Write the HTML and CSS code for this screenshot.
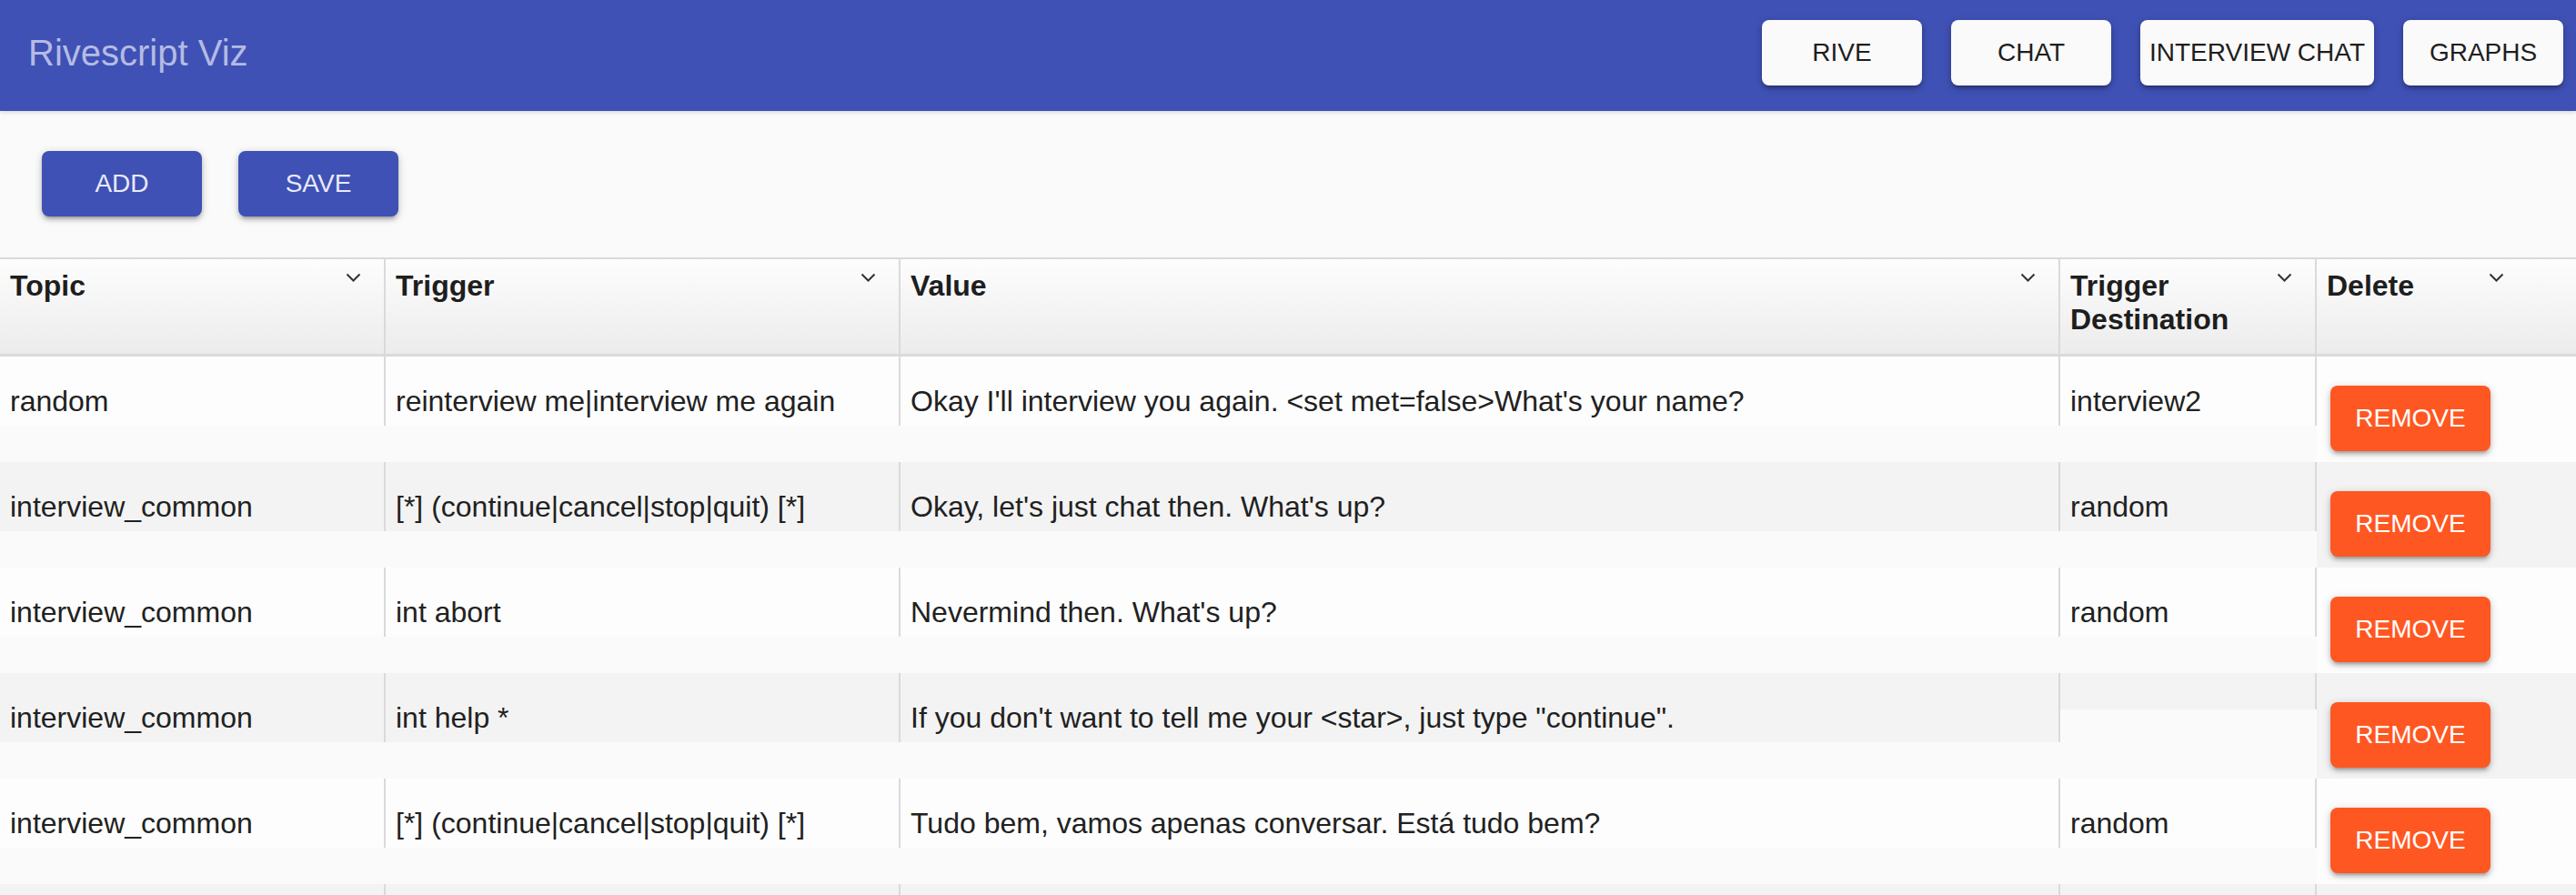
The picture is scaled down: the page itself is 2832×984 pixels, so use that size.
FILE: index.html
```html
<!DOCTYPE html>
<html lang="en">
<head>
<meta charset="utf-8">
<title>Rivescript Viz</title>
<link rel="stylesheet" href="styles.css">
</head>
<body>
<header class="appbar">
  <div class="title">Rivescript Viz</div>
  <nav class="nav">
    <button class="btn btn-light">RIVE</button>
    <button class="btn btn-light">CHAT</button>
    <button class="btn btn-light">INTERVIEW CHAT</button>
    <button class="btn btn-light">GRAPHS</button>
  </nav>
</header>

<div class="toolbar">
  <button class="btn btn-primary">ADD</button>
  <button class="btn btn-primary">SAVE</button>
</div>

<div class="grid">
  <div class="row head">
    <div class="hcell"><span>Topic</span><svg class="chev" viewBox="0 0 17 11"><polyline points="1.5,1.5 8.5,8.5 15.5,1.5"/></svg></div>
    <div class="hcell"><span>Trigger</span><svg class="chev" viewBox="0 0 17 11"><polyline points="1.5,1.5 8.5,8.5 15.5,1.5"/></svg></div>
    <div class="hcell"><span>Value</span><svg class="chev" viewBox="0 0 17 11"><polyline points="1.5,1.5 8.5,8.5 15.5,1.5"/></svg></div>
    <div class="hcell"><span>Trigger Destination</span><svg class="chev" viewBox="0 0 17 11"><polyline points="1.5,1.5 8.5,8.5 15.5,1.5"/></svg></div>
    <div class="hcell hcell-last"><span>Delete</span><svg class="chev" viewBox="0 0 17 11"><polyline points="1.5,1.5 8.5,8.5 15.5,1.5"/></svg></div>
  </div>

  <div class="row odd">
    <div class="cell">random</div>
    <div class="cell">reinterview me|interview me again</div>
    <div class="cell">Okay I'll interview you again. &lt;set met=false&gt;What's your name?</div>
    <div class="cell">interview2</div>
    <div class="dcell"><button class="btn btn-danger">REMOVE</button></div>
  </div>

  <div class="row even">
    <div class="cell">interview_common</div>
    <div class="cell">[*] (continue|cancel|stop|quit) [*]</div>
    <div class="cell">Okay, let's just chat then. What's up?</div>
    <div class="cell">random</div>
    <div class="dcell"><button class="btn btn-danger">REMOVE</button></div>
  </div>

  <div class="row odd">
    <div class="cell">interview_common</div>
    <div class="cell">int abort</div>
    <div class="cell">Nevermind then. What's up?</div>
    <div class="cell">random</div>
    <div class="dcell"><button class="btn btn-danger">REMOVE</button></div>
  </div>

  <div class="row even">
    <div class="cell">interview_common</div>
    <div class="cell">int help *</div>
    <div class="cell">If you don't want to tell me your &lt;star&gt;, just type "continue".</div>
    <div class="cell"></div>
    <div class="dcell"><button class="btn btn-danger">REMOVE</button></div>
  </div>

  <div class="row odd">
    <div class="cell">interview_common</div>
    <div class="cell">[*] (continue|cancel|stop|quit) [*]</div>
    <div class="cell">Tudo bem, vamos apenas conversar. Está tudo bem?</div>
    <div class="cell">random</div>
    <div class="dcell"><button class="btn btn-danger">REMOVE</button></div>
  </div>

  <div class="row even">
    <div class="cell"></div>
    <div class="cell"></div>
    <div class="cell"></div>
    <div class="cell"></div>
    <div class="dcell"></div>
  </div>
</div>
</body>
</html>
```

FILE: styles.css
```css
* { box-sizing: border-box; }

html, body {
  margin: 0;
  padding: 0;
  background: #fafafa;
  font-family: "Liberation Sans", Arial, Helvetica, sans-serif;
  color: #212121;
}

.appbar {
  height: 122px;
  background: #3f51b5;
  display: flex;
  align-items: center;
  justify-content: space-between;
  padding: 0 14px 6px 31px;
  box-shadow: 0 2px 4px rgba(0,0,0,0.12);
  position: relative;
  z-index: 1;
}

.title {
  font-size: 40px;
  line-height: 46px;
  color: #b4bbe3;
  font-weight: 400;
}

.nav {
  display: flex;
  gap: 32px;
}

.btn {
  font-family: "Liberation Sans", Arial, Helvetica, sans-serif;
  font-size: 28px;
  font-weight: 400;
  height: 72px;
  min-width: 176px;
  padding: 0 10px;
  border: none;
  border-radius: 8px;
  cursor: pointer;
  box-shadow: 0 2px 10px rgba(0,0,0,0.2), 0 4px 4px rgba(0,0,0,0.14), 0 6px 2px -4px rgba(0,0,0,0.12);
}

.btn-light {
  background: #fafafa;
  color: #1e1e1e;
}

.btn-primary {
  background: #3f51b5;
  color: #e8eaf6;
}

.btn-danger {
  background: #ff5722;
  color: #fff;
}

.toolbar {
  display: flex;
  gap: 40px;
  padding: 44px 46px 45px;
}

.grid {
  width: 100%;
}

.row {
  display: grid;
  grid-template-columns: 424px 566px 1275px 282px 1fr;
  align-items: start;
}

.head {
  align-items: stretch;
  border-top: 2px solid #dadada;
  border-bottom: 3px solid #dadada;
  height: 109px;
  background: linear-gradient(#fdfdfd, #ececec);
}

.hcell {
  display: flex;
  justify-content: space-between;
  align-items: flex-start;
  gap: 10px;
  padding: 11px 25px 0 11px;
  border-right: 2px solid #dadada;
  font-weight: 700;
  font-size: 32px;
  line-height: 37px;
  color: #1e1e1e;
}

.hcell-last {
  border-right: none;
  padding-right: 79px;
}

.chev {
  flex: none;
  width: 17px;
  height: 11px;
  margin-top: 4px;
  fill: none;
  stroke: #333;
  stroke-width: 2;
}

.cell {
  padding: 31px 11px 9px;
  font-size: 32px;
  line-height: 36px;
  min-height: 76px;
  border-right: 2px solid #dadada;
  white-space: nowrap;
}

.cell:empty {
  min-height: 40px;
}

.dcell {
  height: 116px;
  padding: 32px 0 12px 15px;
}

.odd .cell, .odd .dcell { background: #fdfdfd; }
.even .cell, .even .dcell { background: #f3f3f3; }
```
